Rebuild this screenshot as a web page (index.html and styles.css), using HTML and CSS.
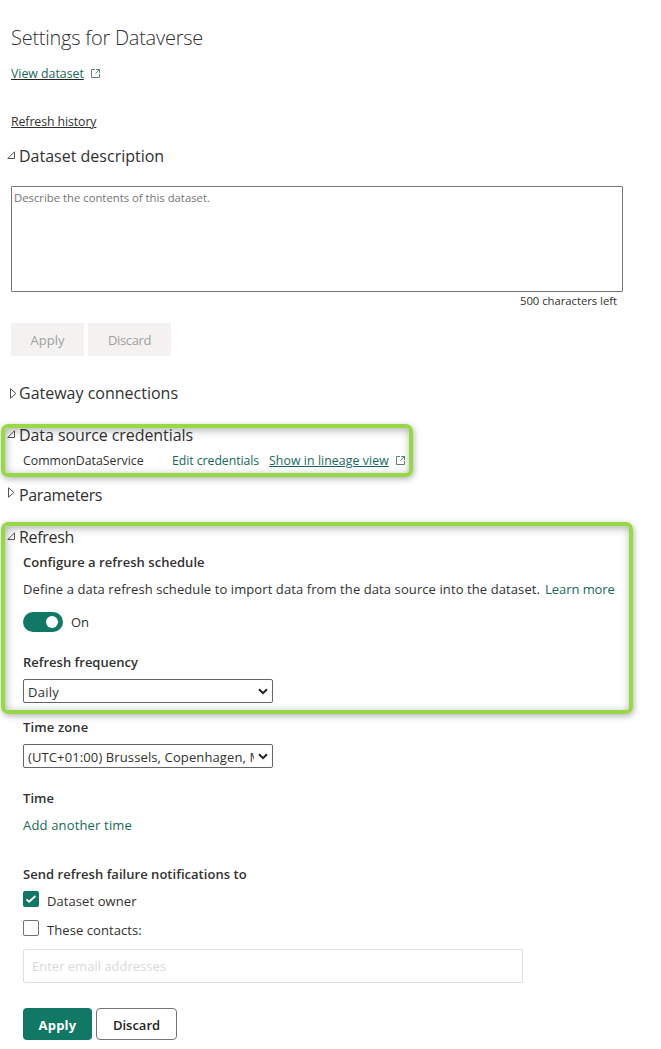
FILE: index.html
```html
<!DOCTYPE html>
<html lang="en">
<head>
<meta charset="utf-8">
<title>Settings for Dataverse</title>
<link rel="stylesheet" href="styles.css">
</head>
<body>
<main class="page">
  <h1 class="title">Settings for Dataverse</h1>
  <div class="view-row">
    <a class="link small view-link">View dataset</a>
    <svg class="ext" width="9" height="9" viewBox="0 0 9 9"><path d="M4 .5H.5v8h8V5M5 .5h3.5V4M8.5.5L4.5 4.5"/></svg>
  </div>
  <a class="small history">Refresh history</a>

  <h2 class="heading description"><svg class="tri" width="8" height="8" viewBox="0 0 8 8"><path d="M7.5.8v6.7H.8z"/></svg>Dataset description</h2>
  <div class="textarea">Describe the contents of this dataset.</div>
  <div class="counter">500 characters left</div>
  <div class="buttons top-buttons">
    <button class="disabled apply-off">Apply</button>
    <button class="disabled discard-off">Discard</button>
  </div>

  <h2 class="heading gateway"><svg class="tri closed" width="8" height="11" viewBox="0 0 8 11"><path d="M1.5.8v9.4L6.9 5.5z"/></svg>Gateway connections</h2>

  <h2 class="heading credentials"><svg class="tri" width="8" height="8" viewBox="0 0 8 8"><path d="M7.5.8v6.7H.8z"/></svg>Data source credentials</h2>
  <div class="source-row">
    <span class="source-name">CommonDataService</span>
    <a class="edit">Edit credentials</a>
    <a class="link lineage">Show in lineage view</a>
    <svg class="ext" width="9" height="9" viewBox="0 0 9 9"><path d="M4 .5H.5v8h8V5M5 .5h3.5V4M8.5.5L4.5 4.5"/></svg>
  </div>

  <h2 class="heading parameters"><svg class="tri closed raised" width="8" height="11" viewBox="0 0 8 11"><path d="M1.5.8v9.4L6.9 5.5z"/></svg>Parameters</h2>

  <h2 class="heading refresh"><svg class="tri" width="8" height="8" viewBox="0 0 8 8"><path d="M7.5.8v6.7H.8z"/></svg>Refresh</h2>
  <section class="body">
    <h3 class="label schedule">Configure a refresh schedule</h3>
    <p class="define"><span>Define a data refresh schedule to import data from the data source into the dataset.</span><a class="learn">Learn more</a></p>
    <div class="toggle-row"><span class="toggle"><i class="knob"></i></span><span>On</span></div>

    <h3 class="label frequency">Refresh frequency</h3>
    <div class="select"><span class="value daily">Daily</span><svg class="chev" width="10" height="7" viewBox="0 0 10 7"><path d="M1 1.2l4 4 4-4"/></svg></div>

    <h3 class="label zone">Time zone</h3>
    <div class="select"><span class="value">(UTC+01:00) Brussels, Copenhagen, Madrid, Paris</span><svg class="chev" width="10" height="7" viewBox="0 0 10 7"><path d="M1 1.2l4 4 4-4"/></svg></div>

    <h3 class="label time">Time</h3>
    <a class="add">Add another time</a>

    <h3 class="label notify">Send refresh failure notifications to</h3>
    <div class="check-row"><span class="box checked"><svg width="16" height="16" viewBox="0 0 16 16"><path d="M3.5 8.3l2.7 2.4 6.2-5.7"/></svg></span><span>Dataset owner</span></div>
    <div class="check-row contacts"><span class="box"></span><span>These contacts:</span></div>
    <div class="email">Enter email addresses</div>
    <div class="buttons bottom-buttons">
      <button class="btn primary">Apply</button>
      <button class="btn secondary">Discard</button>
    </div>
  </section>

  <div class="highlight highlight-credentials"></div>
  <div class="highlight highlight-refresh"></div>
</main>
</body>
</html>
```
FILE: styles.css
```css
* { box-sizing: border-box; }
body { margin: 0; background: #fff; }
.page {
  position: relative;
  width: 661px;
  height: 1049px;
  padding: 24px 0 0 11px;
  overflow: hidden;
  font: 400 13px/20px "Open Sans", "Noto Sans", sans-serif;
  color: #323130;
  white-space: nowrap;
}
h1, h2, h3, p { margin: 0; }
a { color: #17695c; }
svg { display: block; fill: none; flex: none; }
button { font: inherit; padding: 0; margin: 0; border: 0; }

.title { font-size: 20px; line-height: 28px; font-weight: 300; letter-spacing: -.25px; }
.small { font-size: 12.3px; }
.link, .history { text-decoration: underline; text-decoration-thickness: 1px; text-underline-offset: 1px; }
.view-row { display: flex; gap: 7px; height: 20px; margin-top: 12px; }
.view-link { text-decoration-color: #252423; }
.ext { margin-top: 5px; stroke: #49756f; stroke-width: .9; }
.history { display: block; margin-top: 28px; color: #323130; letter-spacing: -.08px; }

.heading {
  display: flex;
  height: 20px;
  margin-left: -5px;
  font-size: 16px;
  font-weight: 400;
}
.tri { width: 8px; margin: 5px 4px 0 1px; overflow: visible; stroke: #55524f; stroke-width: 1; }
.closed { margin: 5px 2px 0 3px; }
.raised { margin: 2px 4px 0 1px; }
.description { margin-top: 14px; }
.gateway { margin-top: 27px; }
.credentials { margin-top: 22px; letter-spacing: -.075px; }
.parameters { margin-top: 14px; letter-spacing: -.35px; }
.refresh { margin-top: 22px; letter-spacing: -.3px; }

.textarea {
  width: 612px;
  height: 106px;
  margin-top: 20px;
  padding: 2px;
  border: 1px solid #767676;
  border-radius: 1px;
  color: #757575;
  font-size: 11.3px;
  line-height: 17px;
}
.counter { width: 606px; padding-top: 1px; font-size: 11.3px; line-height: 16px; text-align: right; letter-spacing: -.03px; }
.buttons { display: flex; gap: 4px; }
.top-buttons { margin-top: 14px; }
.disabled { height: 33px; background: #f3f2f1; color: #a19f9d; }
.apply-off { width: 73px; }
.discard-off { width: 83px; letter-spacing: -.35px; }

.source-row { display: flex; height: 20px; margin: 6px 0 0 12px; font-size: 12.3px; }
.source-name { width: 149px; }
.edit { width: 97px; letter-spacing: -.06px; }
.lineage { width: 120px; margin-right: 7px; letter-spacing: .08px; }

.body { padding-left: 12px; }
.label { font-size: 13px; font-weight: 600; height: 20px; letter-spacing: .04px; }
.schedule { margin-top: 5px; }
.define { display: flex; height: 20px; margin-top: 7px; letter-spacing: .093px; }
.learn { margin-left: 5px; letter-spacing: -.06px; }
.toggle-row { display: flex; gap: 8px; height: 20px; margin-top: 13px; }
.toggle { display: flex; justify-content: flex-end; width: 40px; height: 20px; padding: 4px 5px; border-radius: 10px; background: #117865; }
.knob { width: 12px; height: 12px; border-radius: 50%; background: #fff; }
.frequency { margin-top: 20px; letter-spacing: 0; }
.select {
  display: flex;
  justify-content: space-between;
  width: 250px;
  height: 24px;
  margin-top: 7px;
  padding: 2px 4px 0;
  border: 1px solid #656565;
  border-radius: 2px;
}
.value { width: 226px; overflow: hidden; letter-spacing: .116px; }
.daily { letter-spacing: .25px; }
.chev { margin-top: 6px; stroke: #252423; stroke-width: 2; }
.zone { margin-top: 14px; letter-spacing: .14px; }
.time { margin-top: 20px; }
.add { display: block; margin-top: 7px; letter-spacing: .164px; }
.notify { margin-top: 29px; letter-spacing: .03px; }
.check-row { display: flex; gap: 8px; height: 20px; margin-top: 7px; letter-spacing: .08px; }
.contacts { margin-top: 9px; }
.box { width: 16px; height: 16px; border: 1px solid #757371; border-radius: 2px; }
.checked { border: 0; background: #117865; }
.checked svg { stroke: #fff; stroke-width: 1.8; }
.email {
  width: 500px;
  height: 34px;
  margin-top: 9px;
  padding: 6px 8px;
  border: 1px solid #e1dfdd;
  border-radius: 2px;
  color: #dad8d6;
}
.bottom-buttons { margin-top: 25px; }
.btn { height: 32px; padding-top: 2px; border-radius: 4px; font-weight: 600; }
.primary { width: 69px; background: #117865; color: #fff; font-weight: 700; letter-spacing: .2px; }
.secondary { width: 81px; border: 1px solid #757371; background: #fff; color: #252423; }

/* Callout frames drawn over the settings */
.highlight {
  position: absolute;
  left: 1px;
  border: 4px solid #96d944;
  border-radius: 7px;
  box-shadow: 1px 2px 6px rgba(0, 0, 0, .3), inset 1px 2px 9px rgba(0, 0, 0, .32);
}
.highlight-credentials { top: 424px; width: 412px; height: 53px; }
.highlight-refresh { top: 522px; width: 632px; height: 192px; }
```
